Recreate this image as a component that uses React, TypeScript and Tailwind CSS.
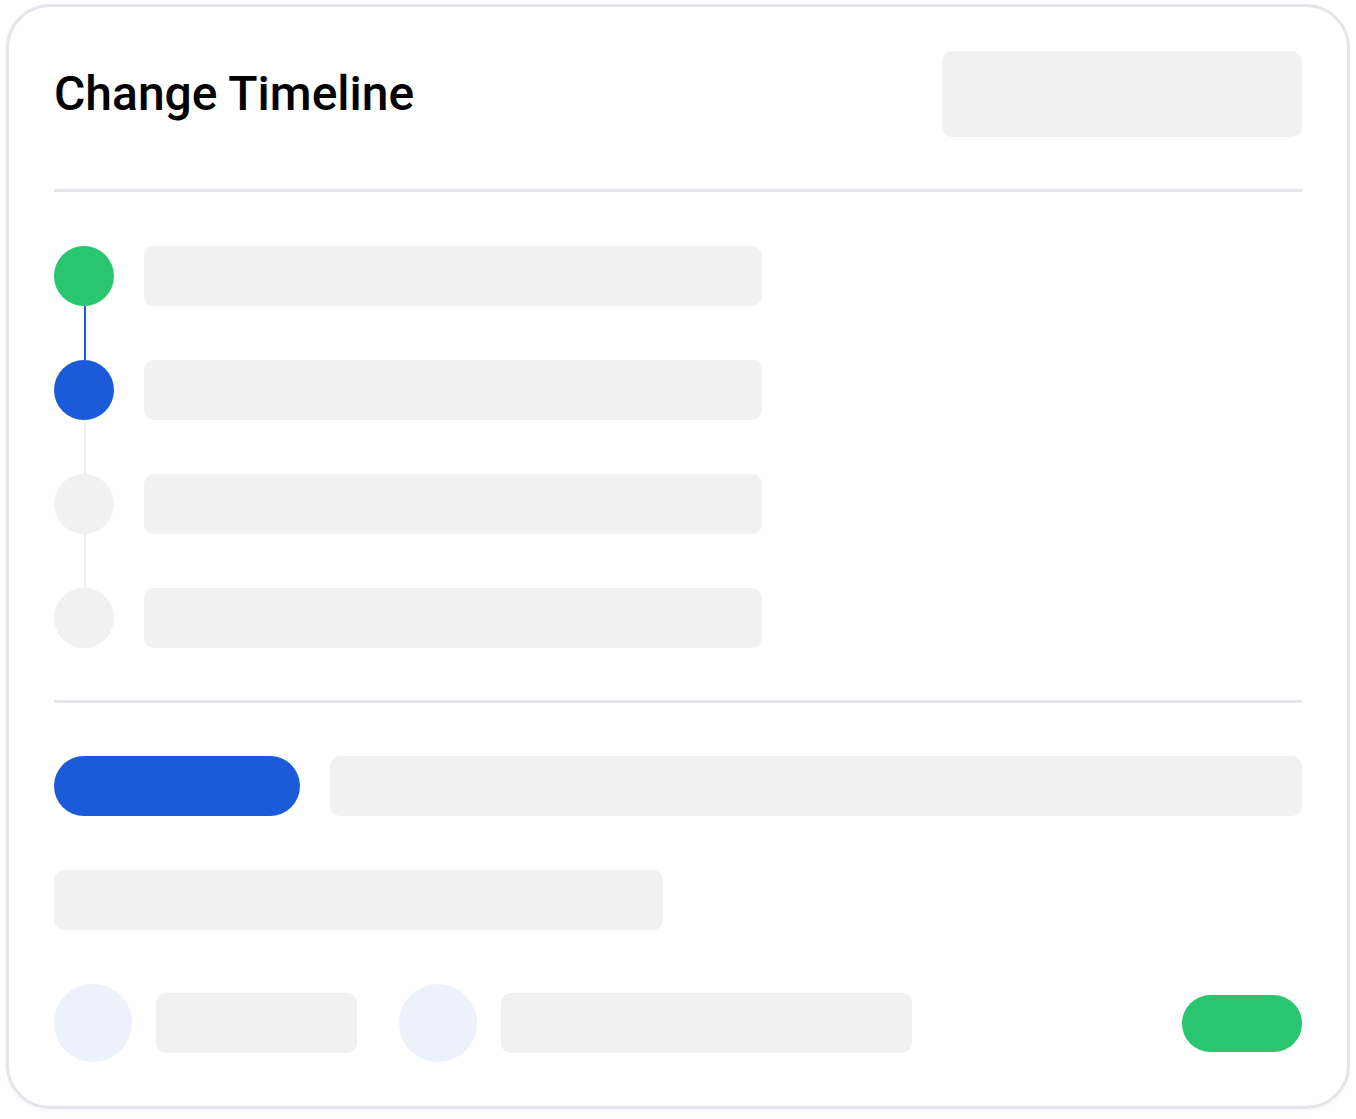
const skeleton = "bg-[#f1f1f1] rounded-[10px]";

type Step = { dot: string; line?: string };

const steps: Step[] = [
  { dot: "bg-[#29c66f]", line: "bg-[#1b5bd9]" },
  { dot: "bg-[#1b5bd9]", line: "bg-[#efefef]" },
  { dot: "bg-[#f1f1f1]", line: "bg-[#efefef]" },
  { dot: "bg-[#f1f1f1]" },
];

function TimelineRow({ dot }: { dot: string }) {
  return (
    <div className="flex items-center gap-[30px]">
      <div className={`size-[60px] shrink-0 rounded-full ${dot}`} />
      <div className={`h-[60px] w-[618px] ${skeleton}`} />
    </div>
  );
}

export default function App() {
  return (
    <div className="min-h-screen bg-white pt-[4px] pl-[6px]" style={{ fontFamily: "Roboto, 'Liberation Sans', sans-serif" }}>
      <div className="w-[1344px] rounded-[44px] border-[3px] border-[#e3e5ea] bg-white px-[45px] pt-[44px] pb-[44px] shadow-[0_2px_4px_rgba(0,0,0,0.04)]">
        {/* header */}
        <div className="flex h-[86px] items-center justify-between">
          <h1 className="text-[48px] font-medium leading-none text-black">Change Timeline</h1>
          <div className={`h-[86px] w-[360px] ${skeleton}`} />
        </div>

        <div className="mt-[52px] h-[3px] bg-[#e3e5ea]" />

        {/* steps */}
        <div className="mt-[54px] flex flex-col">
          {steps.map((s, i) => (
            <div key={i} className="flex flex-col">
              <TimelineRow dot={s.dot} />
              {s.line && <div className={`ml-[30px] h-[54px] w-[2px] ${s.line}`} />}
            </div>
          ))}
        </div>

        <div className="mt-[52px] h-[3px] bg-[#e3e5ea]" />

        {/* details */}
        <div className="mt-[53px] flex items-center gap-[30px]">
          <div className="h-[60px] w-[246px] shrink-0 rounded-full bg-[#1b5bd9]" />
          <div className={`h-[60px] flex-1 ${skeleton}`} />
        </div>
        <div className={`mt-[54px] h-[60px] w-[609px] ${skeleton}`} />

        <div className="mt-[54px] flex items-center">
          <div className="size-[78px] shrink-0 rounded-full bg-[#edf1fc]" />
          <div className={`ml-[24px] h-[60px] w-[201px] ${skeleton}`} />
          <div className="ml-[42px] size-[78px] shrink-0 rounded-full bg-[#edf1fc]" />
          <div className={`ml-[24px] h-[60px] w-[411px] ${skeleton}`} />
          <div className="ml-auto h-[57px] w-[120px] rounded-full bg-[#29c66f]" />
        </div>
      </div>
    </div>
  );
}
